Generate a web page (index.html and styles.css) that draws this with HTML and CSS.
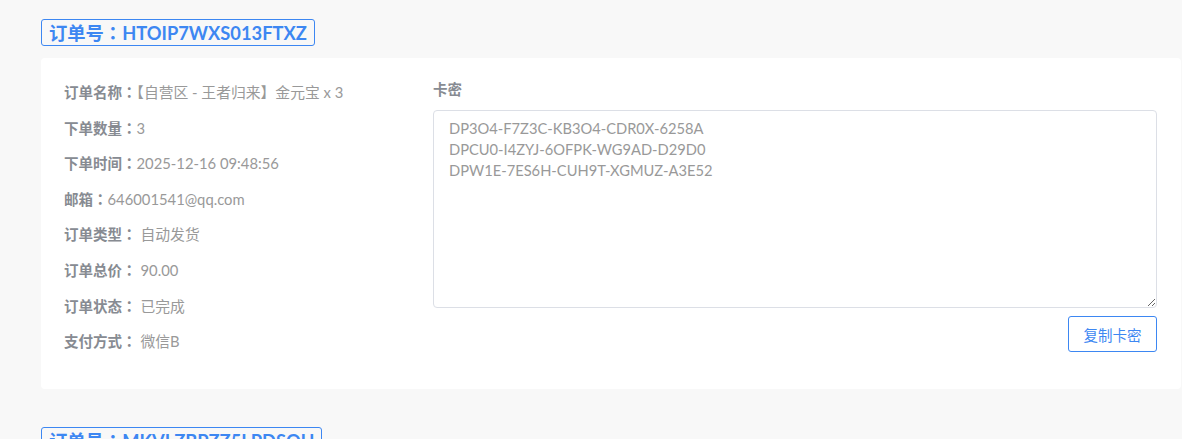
FILE: index.html
```html
<!DOCTYPE html>
<html lang="zh">
<head>
<meta charset="utf-8">
<title>订单</title>
<link rel="stylesheet" href="styles.css">
</head>
<body>
<div class="page">
  <section class="order">
    <div class="order-title">订单号<span class="colon" lang="ja">：</span>HTOIP7WXS013FTXZ</div>
    <div class="card">
      <div class="info">
        <div class="row"><span class="label">订单名称<span class="colon" lang="ja">：</span></span><span class="val">【自营区 - 王者归来】金元宝 x 3</span></div>
        <div class="row"><span class="label">下单数量<span class="colon" lang="ja">：</span></span><span class="val">3</span></div>
        <div class="row"><span class="label">下单时间<span class="colon" lang="ja">：</span></span><span class="val">2025-12-16 09:48:56</span></div>
        <div class="row"><span class="label">邮箱<span class="colon" lang="ja">：</span></span><span class="val">646001541@qq.com</span></div>
        <div class="row"><span class="label">订单类型<span class="colon" lang="ja">：</span></span><span class="val sp">自动发货</span></div>
        <div class="row"><span class="label">订单总价<span class="colon" lang="ja">：</span></span><span class="val sp">90.00</span></div>
        <div class="row"><span class="label">订单状态<span class="colon" lang="ja">：</span></span><span class="val sp">已完成</span></div>
        <div class="row"><span class="label">支付方式<span class="colon" lang="ja">：</span></span><span class="val sp">微信B</span></div>
      </div>
      <div class="keys">
        <div class="keys-label">卡密</div>
        <textarea class="keys-box" readonly>DP3O4-F7Z3C-KB3O4-CDR0X-6258A
DPCU0-I4ZYJ-6OFPK-WG9AD-D29D0
DPW1E-7ES6H-CUH9T-XGMUZ-A3E52</textarea>
        <div class="actions"><button class="copy-btn">复制卡密</button></div>
      </div>
    </div>
  </section>
  <section class="order">
    <div class="order-title">订单号<span class="colon" lang="ja">：</span>MKVLZBPZZ5LPDSQU</div>
  </section>
</div>
</body>
</html>
```
FILE: styles.css
```css
html, body {
  margin: 0;
  padding: 0;
  background: #f8f8f8;
  font-family: Lato, "Noto Sans CJK SC", sans-serif;
  overflow: hidden;
  height: 439px;
}
.page {
  padding: 19px 1px 0 41px;
}
.order {
  margin-bottom: 38px;
}
.colon {
  font-family: "Noto Sans CJK JP", sans-serif;
}
.order-title {
  display: inline-block;
  box-sizing: border-box;
  height: 27px;
  line-height: 25px;
  padding: 0 7px;
  border: 1px solid #3d87f2;
  border-radius: 3px;
  color: #3d87f2;
  font-size: 18.3px;
  font-weight: 700;
  margin-bottom: 12px;
}
.card {
  background: #fff;
  border-radius: 4px;
  padding: 16px 24px 30px 23px;
  display: grid;
  grid-template-columns: 369px 1fr;
  height: 285px;
}
.row {
  height: 35.6px;
  line-height: 35.6px;
  font-size: 14.5px;
  white-space: nowrap;
}
.label {
  color: #878b92;
  font-weight: 700;
}
.val {
  color: #999;
  font-size: 14.8px;
}
.val.sp {
  margin-left: 4px;
}
.keys-label {
  color: #878b92;
  font-weight: 700;
  font-size: 14.5px;
  height: 32px;
  line-height: 32px;
  margin-bottom: 4px;
}
.keys-box {
  display: block;
  box-sizing: border-box;
  width: 100%;
  height: 198px;
  border: 1px solid #dcdfe6;
  border-radius: 4px;
  padding: 7px 15px;
  font-family: Lato, "Noto Sans CJK SC", sans-serif;
  font-size: 14.7px;
  line-height: 21px;
  color: #999;
  resize: vertical;
  outline: none;
}
.actions {
  display: flex;
  justify-content: flex-end;
  margin-top: 8px;
}
.copy-btn {
  width: 89px;
  height: 36px;
  border: 1px solid #3d87f2;
  border-radius: 3px;
  background: #fff;
  color: #3d87f2;
  font-family: Lato, "Noto Sans CJK SC", sans-serif;
  font-size: 14.5px;
  padding: 0;
}
```
